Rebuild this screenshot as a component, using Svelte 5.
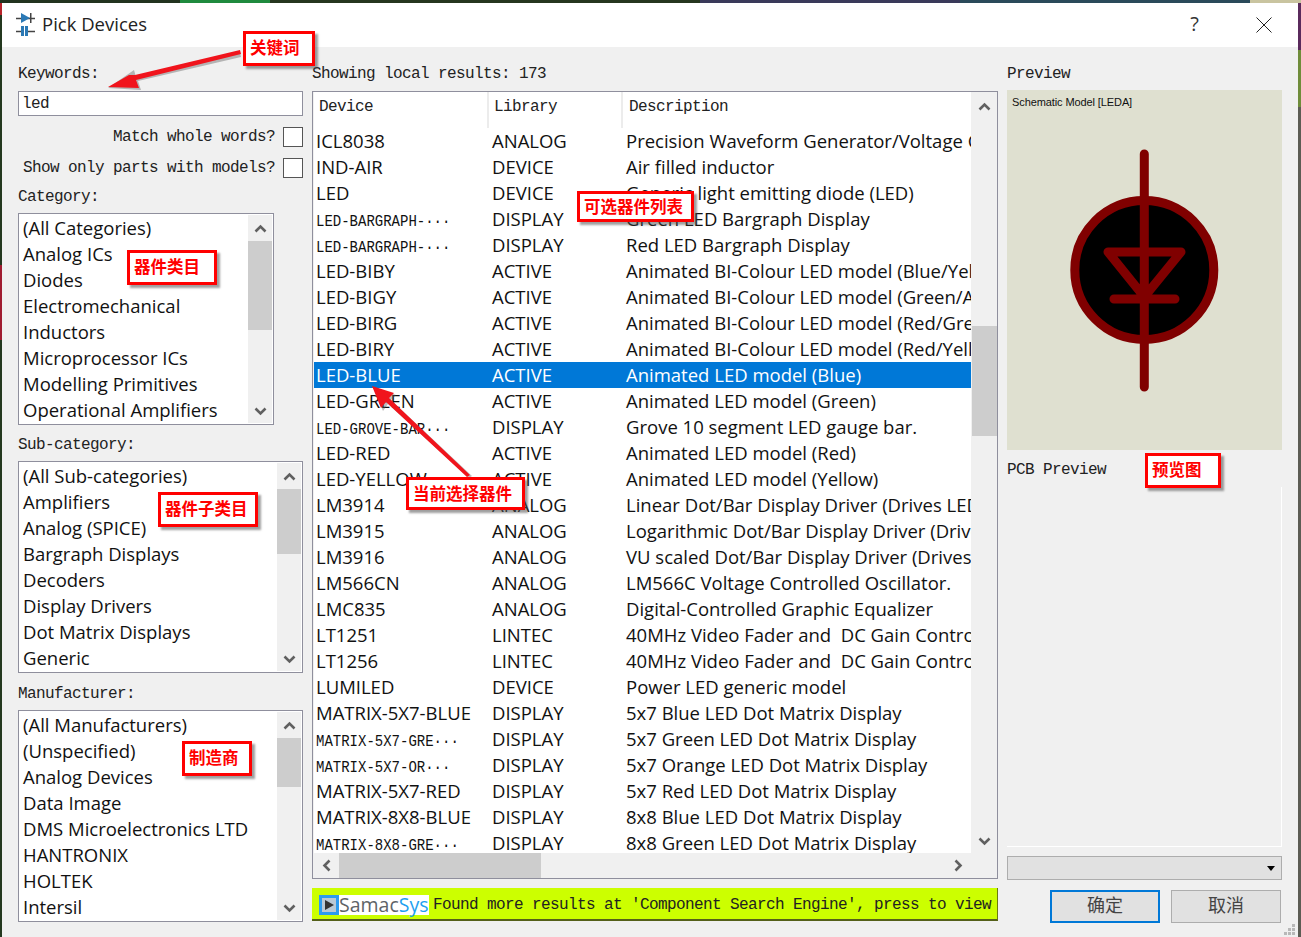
<script>
const categories = ["(All Categories)", "Analog ICs", "Diodes", "Electromechanical", "Inductors", "Microprocessor ICs", "Modelling Primitives", "Operational Amplifiers"];
const subCategories = ["(All Sub-categories)", "Amplifiers", "Analog (SPICE)", "Bargraph Displays", "Decoders", "Display Drivers", "Dot Matrix Displays", "Generic"];
const manufacturers = ["(All Manufacturers)", "(Unspecified)", "Analog Devices", "Data Image", "DMS Microelectronics LTD", "HANTRONIX", "HOLTEK", "Intersil"];

const devices = [
  ["ICL8038", "ANALOG", "Precision Waveform Generator/Voltage Controlled Oscillator"],
  ["IND-AIR", "DEVICE", "Air filled inductor"],
  ["LED", "DEVICE", "Generic light emitting diode (LED)"],
  ["LED-BARGRAPH-···", "DISPLAY", "Green LED Bargraph Display", true],
  ["LED-BARGRAPH-···", "DISPLAY", "Red LED Bargraph Display", true],
  ["LED-BIBY", "ACTIVE", "Animated BI-Colour LED model (Blue/Yellow)"],
  ["LED-BIGY", "ACTIVE", "Animated BI-Colour LED model (Green/Amber)"],
  ["LED-BIRG", "ACTIVE", "Animated BI-Colour LED model (Red/Green)"],
  ["LED-BIRY", "ACTIVE", "Animated BI-Colour LED model (Red/Yellow)"],
  ["LED-BLUE", "ACTIVE", "Animated LED model (Blue)"],
  ["LED-GREEN", "ACTIVE", "Animated LED model (Green)"],
  ["LED-GROVE-BAR···", "DISPLAY", "Grove 10 segment LED gauge bar.", true],
  ["LED-RED", "ACTIVE", "Animated LED model (Red)"],
  ["LED-YELLOW", "ACTIVE", "Animated LED model (Yellow)"],
  ["LM3914", "ANALOG", "Linear Dot/Bar Display Driver (Drives LEDs)"],
  ["LM3915", "ANALOG", "Logarithmic Dot/Bar Display Driver (Drives LEDs)"],
  ["LM3916", "ANALOG", "VU scaled Dot/Bar Display Driver (Drives LEDs)"],
  ["LM566CN", "ANALOG", "LM566C Voltage Controlled Oscillator."],
  ["LMC835", "ANALOG", "Digital-Controlled Graphic Equalizer"],
  ["LT1251", "LINTEC", "40MHz Video Fader and  DC Gain Controlled"],
  ["LT1256", "LINTEC", "40MHz Video Fader and  DC Gain Controlled"],
  ["LUMILED", "DEVICE", "Power LED generic model"],
  ["MATRIX-5X7-BLUE", "DISPLAY", "5x7 Blue LED Dot Matrix Display"],
  ["MATRIX-5X7-GRE···", "DISPLAY", "5x7 Green LED Dot Matrix Display", true],
  ["MATRIX-5X7-OR···", "DISPLAY", "5x7 Orange LED Dot Matrix Display", true],
  ["MATRIX-5X7-RED", "DISPLAY", "5x7 Red LED Dot Matrix Display"],
  ["MATRIX-8X8-BLUE", "DISPLAY", "8x8 Blue LED Dot Matrix Display"],
  ["MATRIX-8X8-GRE···", "DISPLAY", "8x8 Green LED Dot Matrix Display", true],
];
const selected = 9;
</script>

{#snippet listbox(items, cls)}
  <div class="listbox {cls}">
    <div class="items">
      {#each items as item}
        <div class="item">{item}</div>
      {/each}
    </div>
    <div class="vscroll">
      <svg class="chev up" width="13" height="9" viewBox="0 0 13 9"><path d="M1.5 7.5 6.5 2.5 11.5 7.5" /></svg>
      <div class="track"><div class="thumb"></div></div>
      <svg class="chev" width="13" height="9" viewBox="0 0 13 9"><path d="M1.5 1.5 6.5 6.5 11.5 1.5" /></svg>
    </div>
  </div>
{/snippet}

<div class="desktop">
  <div class="window">
    <header class="titlebar">
      <svg class="appicon" width="19" height="25" viewBox="0 0 19 25">
        <path class="ic-line" d="M0 6.5H19M0 19.5H5M12 19.5H19" />
        <path d="M5 1 14 6 5 11Z" fill="#2b79b5" />
        <rect x="14" y="1" width="1.5" height="10" fill="#444" />
        <rect x="5" y="14" width="3" height="10" fill="#2b79b5" />
        <rect x="9" y="14" width="3" height="10" fill="#2b79b5" />
      </svg>
      <span class="title">Pick Devices</span>
      <span class="help">?</span>
      <svg class="close" width="16" height="16" viewBox="0 0 16 16"><path d="M.5 .5 15.5 15.5M15.5 .5 .5 15.5" /></svg>
    </header>

    <div class="content">
      <section class="left">
        <div class="label first">Keywords:</div>
        <input class="keywords" value="led" />
        <div class="check one"><span>Match whole words?</span><i class="box"></i></div>
        <div class="check two"><span>Show only parts with models?</span><i class="box"></i></div>
        <div class="label cat">Category:</div>
        {@render listbox(categories, "cat-list")}
        <div class="label sub">Sub-category:</div>
        {@render listbox(subCategories, "sub-list")}
        <div class="label man">Manufacturer:</div>
        {@render listbox(manufacturers, "man-list")}
      </section>

      <section class="middle">
        <div class="label first">Showing local results: 173</div>
        <div class="table">
          <div class="table-main">
            <div class="table-view">
              <div class="thead">
                <div class="th c1">Device</div>
                <div class="th c2">Library</div>
                <div class="th c3">Description</div>
              </div>
              <div class="rows">
                {#each devices as d, i}
                  <div class="row" class:sel={i === selected}>
                    <div class="cell c1">
                      {#if d[3]}<span class="squeeze">{d[0]}</span>{:else}{d[0]}{/if}
                    </div>
                    <div class="cell c2">{d[1]}</div>
                    <div class="cell c3">{d[2]}</div>
                  </div>
                {/each}
              </div>
            </div>
            <div class="tv-scroll">
              <svg class="chev" width="13" height="9" viewBox="0 0 13 9"><path d="M1.5 7.5 6.5 2.5 11.5 7.5" /></svg>
              <div class="track"><div class="thumb"></div></div>
              <svg class="chev" width="13" height="9" viewBox="0 0 13 9"><path d="M1.5 1.5 6.5 6.5 11.5 1.5" /></svg>
            </div>
          </div>
          <div class="th-scroll">
            <svg class="chev" width="9" height="13" viewBox="0 0 9 13"><path d="M7.5 1.5 2.5 6.5 7.5 11.5" /></svg>
            <div class="htrack"><div class="hthumb"></div></div>
            <svg class="chev" width="9" height="13" viewBox="0 0 9 13"><path d="M1.5 1.5 6.5 6.5 1.5 11.5" /></svg>
          </div>
        </div>
        <div class="samac">
          <div class="logo">
            <svg width="20" height="20" viewBox="0 0 20 20">
              <rect width="20" height="20" fill="#2d9bef" />
              <rect x="3" y="3" width="14" height="14" fill="#b9c9d6" />
              <path d="M6 5 15 10 6 15Z" fill="#333" />
            </svg>
            <span class="samac-a">Samac</span><span class="samac-b">Sys</span>
          </div>
          <span class="samac-text">Found more results at 'Component Search Engine', press to view</span>
        </div>
      </section>

      <section class="right">
        <div class="label first">Preview</div>
        <div class="preview">
          <svg class="symbol" viewBox="0 0 275 360">
            <circle cx="137.3" cy="180" r="69.5" fill="#000" stroke="#800000" stroke-width="9" />
            <path d="M137.3 64V297M101 162H174L137.3 207 101 162ZM107 209H168" fill="none" stroke="#800000" stroke-width="9" stroke-linecap="round" stroke-linejoin="round" />
          </svg>
          <span class="model">Schematic Model [LEDA]</span>
        </div>
        <div class="label pcb">PCB Preview</div>
        <div class="pcbbox"></div>
        <div class="combo"><svg width="8" height="5" viewBox="0 0 8 5"><path d="M0 0H8L4 5Z" /></svg></div>
        <div class="buttons">
          <div class="btn ok">确定</div>
          <div class="btn">取消</div>
        </div>
      </section>
    </div>

    <svg class="grip" width="11" height="11" viewBox="0 0 11 11" fill="#b8b8b8">
      <rect x="8" y="0" width="3" height="3" /><rect x="4" y="4" width="3" height="3" /><rect x="8" y="4" width="3" height="3" />
      <rect x="0" y="8" width="3" height="3" /><rect x="4" y="8" width="3" height="3" /><rect x="8" y="8" width="3" height="3" />
    </svg>
  </div>

  <!-- red markup drawn on top of the dialog -->
  <svg class="arrows" width="1301" height="937" viewBox="0 0 1301 937">
    <path class="ar-shadow" d="M241 57 138 81 141 90 108 88 134 70 136 77 240 52Z" />
    <path class="ar" d="M241 54 136 80 139 88 108 87 129 75 135 75 240 50Z" />
    <path class="ar-shadow" d="M469 478 388 404 383 411 373 387 396 395 391 400 472 476Z" />
    <path class="ar" d="M467 477 386 402 381 408 372 386 394 393 389 398 470 475Z" />
  </svg>
  <div class="note n1">关键词</div>
  <div class="note n2">可选器件列表</div>
  <div class="note n3">器件类目</div>
  <div class="note n4">器件子类目</div>
  <div class="note n5">制造商</div>
  <div class="note n6">预览图</div>
  <div class="note n7">当前选择器件</div>
</div>

<style>
:global(body) {
  margin: 0;
  overflow: hidden;
}
.desktop {
  position: relative;
  box-sizing: border-box;
  width: 1301px;
  height: 937px;
  padding: 3px 3px 0 2px;
  background:
    linear-gradient(90deg, #22331f 0 180px, #1f8a3e 180px 270px, #26361f 270px 700px, #3a3a5a 700px 960px, #2a4a5a 960px 1250px, #c9c4a0 1250px 1301px) top / 100% 3px no-repeat,
    linear-gradient(#b8242a 0 15px, #24381f 15px 265px, #a01c30 265px 340px, #24381f 340px) left / 2px 100% no-repeat,
    linear-gradient(#5a2a5c 0 50px, #6f8c3a 50px 107px, #5c5c54 107px);
}
.window {
  position: relative;
  box-sizing: border-box;
  height: 934px;
  background: #f0f0f0;
  font-family: "Liberation Mono", monospace;
  color: #222;
  overflow: hidden;
}
.titlebar {
  display: flex;
  align-items: center;
  height: 44px;
  background: #fff;
  padding-left: 14px;
}
.appicon {
  flex: none;
  margin-bottom: 2px;
}
.ic-line {
  stroke: #444;
  stroke-width: 1.5;
  fill: none;
}
.title {
  margin-left: 7px;
  margin-bottom: 4px;
  font: 18.5px "Open Sans", sans-serif;
  color: #222;
}
.help {
  margin-left: auto;
  margin-bottom: 4px;
  font: 20px "Open Sans", sans-serif;
  color: #333;
}
.close {
  margin: 0 26px 0 57px;
}
.close path {
  stroke: #222;
  stroke-width: 1;
  fill: none;
}

.content {
  display: flex;
  gap: 9px;
  padding: 0 16px;
}
.label {
  font-size: 16px;
  letter-spacing: -0.6px;
  line-height: 18px;
  height: 18px;
}
.label.first {
  margin-top: 18px;
  margin-bottom: 8px;
}

.left {
  width: 285px;
  flex: none;
}
.keywords {
  display: block;
  box-sizing: border-box;
  width: 285px;
  height: 25px;
  margin: 0;
  border: 1px solid #8f8f9d;
  border-radius: 0;
  outline: none;
  background: #fff;
  padding: 0 3px;
  font: 16px "Liberation Mono", monospace;
  letter-spacing: -0.6px;
  color: #222;
}
.check {
  display: flex;
  justify-content: flex-end;
  align-items: center;
  gap: 8px;
  height: 21px;
  font-size: 16px;
  letter-spacing: -0.6px;
}
.check.one,
.check.two {
  margin-top: 10px;
}
.box {
  display: block;
  width: 18px;
  height: 18px;
  border: 1px solid #555;
  background: #fff;
}
.label.cat {
  margin-top: 10px;
  margin-bottom: 7px;
}
.label.sub {
  margin-top: 11px;
  margin-bottom: 7px;
}
.label.man {
  margin-top: 12px;
  margin-bottom: 7px;
}

.listbox {
  display: flex;
  box-sizing: border-box;
  height: 212px;
  border: 1px solid #8f8f9d;
  background: #fff;
}
.cat-list {
  width: 256px;
}
.items {
  flex: 1;
  padding-top: 1px;
  overflow: hidden;
}
.item {
  height: 26px;
  padding-left: 4px;
  white-space: nowrap;
  font: 18.5px/26px "Open Sans", sans-serif;
  color: #111;
}
.vscroll,
.tv-scroll {
  display: flex;
  flex-direction: column;
  align-items: center;
  flex: none;
  background: #f0f0f0;
}
.vscroll {
  width: 24px;
  margin: 1px 1px 1px 0;
}
.chev {
  flex: none;
  margin: 7px 0;
}
.vscroll .chev.up {
  margin: 9px 0 8px;
}
.chev path {
  fill: none;
  stroke: #606060;
  stroke-width: 2.6;
}
.track {
  flex: 1;
  width: 100%;
}
.thumb {
  background: #cdcdcd;
}
.cat-list .thumb {
  height: 89px;
}
.sub-list .thumb {
  height: 65px;
}
.man-list .thumb {
  height: 49px;
}

.middle {
  width: 686px;
  flex: none;
}
.table {
  box-sizing: border-box;
  height: 788px;
  border: 1px solid #8f8f9d;
  background: #f0f0f0;
  display: flex;
  flex-direction: column;
}
.table-main {
  display: flex;
  height: 761px;
}
.table-view {
  width: 657px;
  margin-left: 1px;
  flex: none;
  background: #fff;
  overflow: hidden;
}
.thead {
  display: flex;
  height: 36px;
}
.th {
  font-size: 16px;
  letter-spacing: -0.6px;
  line-height: 30px;
  padding-left: 5px;
  border-right: 2px solid #ececec;
}
.th.c3 {
  border: none;
  padding-left: 6px;
}
.c1 {
  box-sizing: border-box;
  width: 175px;
  flex: none;
}
.c2 {
  box-sizing: border-box;
  width: 134px;
  flex: none;
}
.c3 {
  flex: 1;
  min-width: 0;
}
.row {
  display: flex;
  height: 26px;
}
.cell {
  font: 18.5px/26px "Open Sans", sans-serif;
  white-space: pre;
  overflow: hidden;
  padding-left: 2px;
  color: #111;
}
.cell.c2 {
  padding-left: 3px;
}
.cell.c3 {
  padding-left: 3px;
}
.squeeze {
  display: inline-block;
  font: 16px/26px "Liberation Mono", monospace;
  transform: scaleX(0.875);
  transform-origin: left center;
}
.row.sel {
  background: #0078d7;
}
.row.sel .cell {
  color: #fff;
}
.tv-scroll {
  width: 25px;
  margin-left: 1px;
}
.tv-scroll .chev {
  margin: 10px 0 7px;
}
.tv-scroll .thumb {
  height: 110px;
  margin-top: 208px;
}
.th-scroll {
  display: flex;
  align-items: center;
  height: 25px;
  padding-left: 9px;
}
.th-scroll .chev {
  margin: 0;
}
.htrack {
  width: 605px;
  height: 25px;
  margin: 0 10px 0 8px;
}
.hthumb {
  width: 202px;
  height: 25px;
  background: #cdcdcd;
}

.samac {
  display: flex;
  align-items: center;
  box-sizing: border-box;
  height: 33px;
  margin-top: 9px;
  padding: 3px 0 0 7px;
  background: #ccff00;
  border-right: 1px solid #6a7a10;
  border-bottom: 2px solid #55601a;
}
.logo {
  display: flex;
  align-items: center;
  flex: none;
  width: 110px;
  height: 20px;
  background: #fff;
  font: 19.5px/20px "Open Sans", sans-serif;
}
.samac-a {
  color: #5f6468;
}
.samac-b {
  color: #1ea0f0;
}
.samac-text {
  margin-left: 4px;
  font-size: 16px;
  letter-spacing: -0.6px;
  white-space: pre;
  color: #222;
}

.right {
  width: 275px;
  flex: none;
}
.right .label.first {
  margin-bottom: 7px;
}
.preview {
  position: relative;
  height: 360px;
  background: #dfe0d0;
}
.symbol {
  display: block;
  width: 275px;
  height: 360px;
}
.model {
  position: absolute;
  left: 5px;
  top: 5px;
  font: 11px/14px "Liberation Sans", sans-serif;
  letter-spacing: -0.1px;
  color: #111;
}
.label.pcb {
  margin-top: 11px;
}
.pcbbox {
  box-sizing: border-box;
  height: 360px;
  margin-top: 8px;
  border-right: 1px solid #fff;
  border-bottom: 1px solid #fff;
}
.combo {
  display: flex;
  align-items: center;
  justify-content: flex-end;
  box-sizing: border-box;
  height: 24px;
  margin-top: 9px;
  padding-right: 6px;
  background: #e1e1e1;
  border: 1px solid #adadad;
}
.buttons {
  display: flex;
  justify-content: flex-end;
  gap: 11px;
  margin-top: 10px;
  padding-right: 1px;
}
.btn {
  box-sizing: border-box;
  width: 110px;
  height: 33px;
  background: #e1e1e1;
  border: 1px solid #adadad;
  text-align: center;
  font: 18px/27px "Noto Sans CJK SC", sans-serif;
  color: #444;
}
.btn.ok {
  border: 2px solid #0078d7;
  line-height: 25px;
}
.grip {
  position: absolute;
  right: 3px;
  bottom: 2px;
}

.arrows {
  position: absolute;
  left: 0;
  top: 0;
  pointer-events: none;
}
.ar {
  fill: #f0141c;
}
.ar-shadow {
  fill: rgba(90, 90, 90, 0.4);
}
.note {
  position: absolute;
  box-sizing: border-box;
  height: 35px;
  padding-left: 4px;
  border: 3px solid #f00;
  background: #fff;
  box-shadow: 3px 3px 2px rgba(80, 80, 80, 0.55);
  font: bold 16.5px/26px "Noto Sans CJK SC", sans-serif;
  color: #f00;
}
.n1 { left: 243px; top: 31px; width: 72px; }
.n2 { left: 577px; top: 191px; width: 117px; height: 31px; line-height: 25px; }
.n3 { left: 127px; top: 250px; width: 90px; }
.n4 { left: 158px; top: 492px; width: 100px; }
.n5 { left: 182px; top: 741px; width: 70px; }
.n6 { left: 1145px; top: 453px; width: 76px; }
.n7 { left: 406px; top: 477px; width: 119px; height: 33px; line-height: 27px; }
</style>
